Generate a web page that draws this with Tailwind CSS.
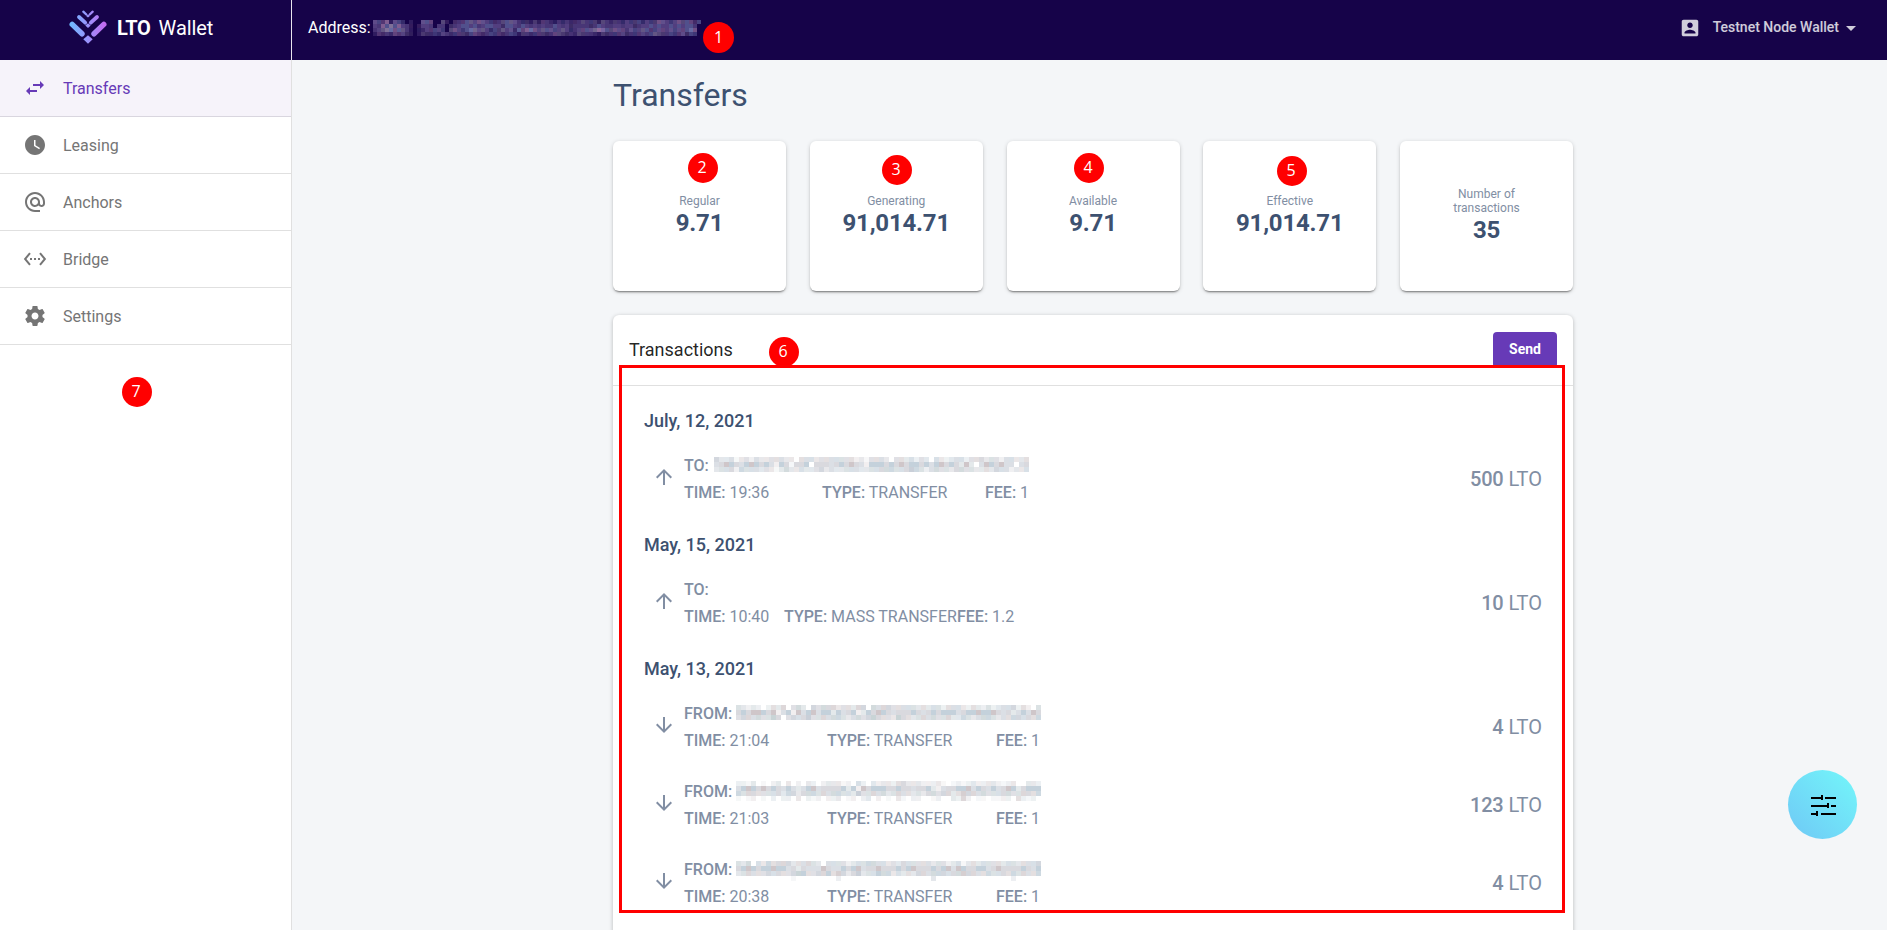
<!DOCTYPE html>
<html lang="en">
<head>
<meta charset="utf-8">
<title>LTO Wallet</title>
<script src="https://cdn.jsdelivr.net/npm/@tailwindcss/browser@4"></script>
</head>
<body class="font-[Roboto,sans-serif] bg-[#f4f6f8]">
<div class="relative flex h-[930px] w-[1887px] overflow-hidden bg-[#f4f6f8]">

  <!-- Sidebar -->
  <aside class="flex w-[292px] shrink-0 flex-col border-r border-[#e0e0e0] bg-white">
    <div class="-mr-px flex h-[60px] shrink-0 items-center border-r border-[#e8e5ee] bg-[#160349] pl-[69px] text-white">
      <svg class="-mt-1.5 h-[34px] w-[38px]" viewBox="0 0 38 34" fill="none">
        <defs><linearGradient id="g" gradientUnits="userSpaceOnUse" x1="0" y1="0" x2="38" y2="0"><stop offset="0" stop-color="#6cbcff"/><stop offset=".5" stop-color="#9a92fc"/><stop offset="1" stop-color="#c767ee"/></linearGradient></defs>
        <g stroke="url(#g)">
          <path stroke-width="5.400" stroke-linecap="round" d="M3.200 14.400 13 23.800M34.800 14.400 25 23.800"/>
          <path stroke-width="3.800" stroke-linecap="round" d="M10 7 16.200 12.700M28 7 21.800 12.700"/>
          <path stroke-width="2.300" stroke-linecap="round" d="M14.300 1.700 17.300 4.500M23.700 1.700 20.700 4.500"/>
        </g>
        <path fill="url(#g)" d="M19 25.200 23.700 29.200 19 33.800 14.300 29.200ZM19 13.200 21.700 15.600 19 18 16.300 15.600ZM19 4.400 20.900 6 19 7.500 17.100 6Z"/>
      </svg>
      <div class="-mt-[5px] ml-[10px] flex gap-[8px] text-[20px] leading-[24px]"><span class="font-bold tracking-[-0.3px]">LTO</span><span class="tracking-[-0.1px]">Wallet</span></div>
    </div>
    <nav class="flex flex-col text-[16px] text-[#757575]">
      <a class="flex h-[57px] items-center gap-4 border-b border-[#d9d6df] bg-[#f6f3fa] pl-[23px] text-[#673ab7]">
        <svg class="size-6" viewBox="0 0 24 24" fill="currentColor"><path d="M6.990 11L3 15l3.990 4v-3H14v-2H6.990v-3zM21 9l-3.990-4v3H10v2h7.010v3L21 9z"/></svg><span class="pt-0.5">Transfers</span></a>
      <a class="flex h-[57px] items-center gap-4 border-b border-[#e0e0e0] pl-[23px]">
        <svg class="size-6" viewBox="0 0 24 24" fill="currentColor"><path d="M12 2C6.500 2 2 6.500 2 12s4.500 10 10 10 10-4.500 10-10S17.500 2 12 2zm4.200 14.200L11 13V7h1.500v5.200l4.500 2.700-.8 1.300z"/></svg><span class="pt-0.5">Leasing</span></a>
      <a class="flex h-[57px] items-center gap-4 border-b border-[#e0e0e0] pl-[23px]">
        <svg class="size-6" viewBox="0 0 24 24" fill="currentColor"><path d="M12 2C6.480 2 2 6.480 2 12s4.480 10 10 10h5v-2h-5c-4.340 0-8-3.660-8-8s3.660-8 8-8 8 3.660 8 8v1.430c0 .79-.71 1.570-1.500 1.570s-1.500-.78-1.500-1.570V12c0-2.760-2.240-5-5-5s-5 2.240-5 5 2.240 5 5 5c1.380 0 2.640-.56 3.540-1.470.65.890 1.770 1.470 2.960 1.470 1.970 0 3.500-1.600 3.500-3.570V12c0-5.520-4.480-10-10-10zm0 13c-1.660 0-3-1.340-3-3s1.340-3 3-3 3 1.340 3 3-1.340 3-3 3z"/></svg><span class="pt-0.5">Anchors</span></a>
      <a class="flex h-[57px] items-center gap-4 border-b border-[#e0e0e0] pl-[23px]">
        <svg class="size-6" viewBox="0 0 24 24" fill="currentColor"><path d="M7.770 6.760L6.230 5.480.82 12l5.410 6.520 1.540-1.280L3.420 12l4.350-5.240zM7 13h2v-2H7v2zm10-2h-2v2h2v-2zm-6 2h2v-2h-2v2zm6.770-7.520l-1.540 1.280L20.580 12l-4.350 5.240 1.540 1.280L23.180 12l-5.410-6.520z"/></svg><span class="pt-0.5">Bridge</span></a>
      <a class="flex h-[57px] items-center gap-4 border-b border-[#e0e0e0] pl-[23px]">
        <svg class="size-6" viewBox="0 0 24 24" fill="currentColor"><path d="M19.430 12.980c.04-.32.07-.64.07-.98s-.03-.66-.07-.98l2.110-1.650c.19-.15.24-.42.12-.64l-2-3.460c-.12-.22-.39-.3-.61-.22l-2.490 1c-.52-.4-1.080-.73-1.690-.98l-.38-2.650C14.460 2.180 14.250 2 14 2h-4c-.25 0-.46.18-.49.42l-.38 2.650c-.61.25-1.170.59-1.690.98l-2.490-1c-.23-.09-.49 0-.61.22l-2 3.460c-.13.22-.07.49.12.64l2.110 1.650c-.04.32-.07.65-.07.98s.03.66.07.98l-2.110 1.650c-.19.15-.24.42-.12.64l2 3.460c.12.22.39.3.61.22l2.490-1c.52.4 1.080.73 1.690.98l.38 2.650c.03.24.24.42.49.42h4c.25 0 .46-.18.49-.42l.38-2.650c.61-.25 1.170-.59 1.690-.98l2.490 1c.23.09.49 0 .61-.22l2-3.460c.12-.22.07-.49-.12-.64l-2.110-1.650zM12 15.500c-1.930 0-3.500-1.570-3.500-3.500s1.570-3.500 3.500-3.500 3.500 1.570 3.500 3.500-1.570 3.500-3.500 3.500z"/></svg><span class="pt-0.5">Settings</span></a>
    </nav>
  </aside>

  <div class="flex min-w-0 flex-1 flex-col">
    <!-- Top bar -->
    <header class="flex h-[60px] shrink-0 justify-between bg-[#160349] pl-4 pr-[31px] pt-4 text-white">
      <div class="flex h-6 items-start gap-[2px] text-[16px] leading-[23px]"><span>Address:</span><span data-mosaic="head" class="mt-1"></span></div>
      <div class="flex h-6 items-center text-[14px] font-medium text-white/80">
        <svg class="size-[22px]" viewBox="0 0 24 24" fill="currentColor"><path d="M3 5v14c0 1.100.89 2 2 2h14c1.100 0 2-.9 2-2V5c0-1.100-.9-2-2-2H5c-1.110 0-2 .9-2 2zm12 4c0 1.660-1.340 3-3 3s-3-1.340-3-3 1.340-3 3-3 3 1.340 3 3zm-9 8c0-2 4-3.100 6-3.100s6 1.100 6 3.100v1H6v-1z"/></svg>
        <span class="-mt-0.5 ml-3 whitespace-nowrap">Testnet Node Wallet</span>
        <svg class="ml-[7px] h-[5px] w-[10px]" viewBox="0 0 10 5" fill="currentColor"><path d="M0 0h10L5 5z"/></svg>
      </div>
    </header>

    <main class="ml-[321px] flex w-[960px] flex-col">
      <h1 class="mb-[11px] flex h-[70px] items-center text-[32px] text-[#3d5170]">Transfers</h1>

      <section class="grid grid-cols-[173px_173px_173px_173px_173px] justify-between text-center text-[#3d5170]">
        <div class="flex h-[150px] flex-col items-center justify-center rounded-md bg-white shadow-[0_1px_4px_rgba(0,0,0,0.18),0_2px_2px_-1px_rgba(0,0,0,0.45)]"><div class="text-[12px] leading-[14px] text-[#818ea3]">Regular</div><div class="text-[24px] font-bold leading-[30px] tracking-[-0.2px]">9.71</div></div>
        <div class="flex h-[150px] flex-col items-center justify-center rounded-md bg-white shadow-[0_1px_4px_rgba(0,0,0,0.18),0_2px_2px_-1px_rgba(0,0,0,0.45)]"><div class="text-[12px] leading-[14px] text-[#818ea3]">Generating</div><div class="text-[24px] font-bold leading-[30px] tracking-[-0.2px]">91,014.71</div></div>
        <div class="flex h-[150px] flex-col items-center justify-center rounded-md bg-white shadow-[0_1px_4px_rgba(0,0,0,0.18),0_2px_2px_-1px_rgba(0,0,0,0.45)]"><div class="text-[12px] leading-[14px] text-[#818ea3]">Available</div><div class="text-[24px] font-bold leading-[30px] tracking-[-0.2px]">9.71</div></div>
        <div class="flex h-[150px] flex-col items-center justify-center rounded-md bg-white shadow-[0_1px_4px_rgba(0,0,0,0.18),0_2px_2px_-1px_rgba(0,0,0,0.45)]"><div class="text-[12px] leading-[14px] text-[#818ea3]">Effective</div><div class="text-[24px] font-bold leading-[30px] tracking-[-0.2px]">91,014.71</div></div>
        <div class="flex h-[150px] flex-col items-center justify-center rounded-md bg-white shadow-[0_1px_4px_rgba(0,0,0,0.18),0_2px_2px_-1px_rgba(0,0,0,0.45)]"><div class="text-[12px] leading-[14px] text-[#818ea3]">Number of<br>transactions</div><div class="text-[24px] font-bold leading-[30px] tracking-[-0.2px]">35</div></div>
      </section>

      <section class="mt-6 h-[700px] rounded-md bg-white shadow-[0_1px_4px_rgba(0,0,0,0.25)]">
        <div class="flex h-[71px] items-start justify-between border-b border-[#e0e0e0] px-4 pt-[17px]">
          <h2 class="text-[18px] leading-9 text-black/87">Transactions</h2>
          <button class="h-9 w-16 rounded bg-[#673ab7] pb-0.5 text-[14px] font-bold text-white">Send</button>
        </div>
        <div class="flex flex-col pl-[31px] pr-[31px] pt-[7px] text-[16px] leading-[27px] text-[#818ea3]">
          <h3 class="flex h-[46px] items-center pt-[8px] text-[18px] font-medium text-[#3d5170]">July, 12, 2021</h3>
          <div class="flex h-[78px] items-center pl-2">
            <svg class="mb-0.5 size-6" viewBox="0 0 24 24" fill="currentColor"><path d="M4 12l1.410 1.410L11 7.830V20h2V7.830l5.580 5.590L20 12l-8-8-8 8z"/></svg>
            <div class="ml-2 flex-1 pt-0.5"><div class="flex gap-[5px]"><span class="font-medium">TO:</span><span data-mosaic="a" class="mt-[5px]"></span></div>
              <div class="grid grid-cols-[138px_163px_auto] justify-start whitespace-nowrap"><span><b class="font-medium">TIME:</b> 19:36</span><span><b class="font-medium">TYPE:</b> TRANSFER</span><span><b class="font-medium">FEE:</b> 1</span></div></div>
            <div class="pt-0.5 text-[20px]"><b class="font-medium tracking-[-0.2px]">500</b> LTO</div>
          </div>
          <h3 class="flex h-[46px] items-center pt-[8px] text-[18px] font-medium text-[#3d5170]">May, 15, 2021</h3>
          <div class="flex h-[78px] items-center pl-2">
            <svg class="mb-0.5 size-6" viewBox="0 0 24 24" fill="currentColor"><path d="M4 12l1.410 1.410L11 7.830V20h2V7.830l5.580 5.590L20 12l-8-8-8 8z"/></svg>
            <div class="ml-2 flex-1 pt-0.5"><div class="font-medium">TO:</div>
              <div class="grid grid-cols-[100px_173px_auto] justify-start whitespace-nowrap"><span><b class="font-medium">TIME:</b> 10:40</span><span><b class="font-medium">TYPE:</b> MASS TRANSFER</span><span><b class="font-medium">FEE:</b> 1.2</span></div></div>
            <div class="pt-0.5 text-[20px]"><b class="font-medium tracking-[-0.2px]">10</b> LTO</div>
          </div>
          <h3 class="flex h-[46px] items-center pt-[8px] text-[18px] font-medium text-[#3d5170]">May, 13, 2021</h3>
          <div class="flex h-[78px] items-center pl-2">
            <svg class="mb-0.5 size-6" viewBox="0 0 24 24" fill="currentColor"><path d="M20 12l-1.410-1.410L13 16.170V4h-2v12.170l-5.580-5.590L4 12l8 8 8-8z"/></svg>
            <div class="ml-2 flex-1 pt-0.5"><div class="flex gap-[4px]"><span class="font-medium">FROM:</span><span data-mosaic="b" class="mt-[5px]"></span></div>
              <div class="grid grid-cols-[143px_169px_auto] justify-start whitespace-nowrap"><span><b class="font-medium">TIME:</b> 21:04</span><span><b class="font-medium">TYPE:</b> TRANSFER</span><span><b class="font-medium">FEE:</b> 1</span></div></div>
            <div class="pt-0.5 text-[20px]"><b class="font-medium tracking-[-0.2px]">4</b> LTO</div>
          </div>
          <div class="flex h-[78px] items-center pl-2">
            <svg class="mb-0.5 size-6" viewBox="0 0 24 24" fill="currentColor"><path d="M20 12l-1.410-1.410L13 16.170V4h-2v12.170l-5.580-5.590L4 12l8 8 8-8z"/></svg>
            <div class="ml-2 flex-1 pt-0.5"><div class="flex gap-[4px]"><span class="font-medium">FROM:</span><span data-mosaic="c" class="mt-[3px]"></span></div>
              <div class="grid grid-cols-[143px_169px_auto] justify-start whitespace-nowrap"><span><b class="font-medium">TIME:</b> 21:03</span><span><b class="font-medium">TYPE:</b> TRANSFER</span><span><b class="font-medium">FEE:</b> 1</span></div></div>
            <div class="pt-0.5 text-[20px]"><b class="font-medium tracking-[-0.2px]">123</b> LTO</div>
          </div>
          <div class="flex h-[78px] items-center pl-2">
            <svg class="mb-0.5 size-6" viewBox="0 0 24 24" fill="currentColor"><path d="M20 12l-1.410-1.410L13 16.170V4h-2v12.170l-5.580-5.590L4 12l8 8 8-8z"/></svg>
            <div class="ml-2 flex-1 pt-0.5"><div class="flex gap-[4px]"><span class="font-medium">FROM:</span><span data-mosaic="d" class="mt-[5px]"></span></div>
              <div class="grid grid-cols-[143px_169px_auto] justify-start whitespace-nowrap"><span><b class="font-medium">TIME:</b> 20:38</span><span><b class="font-medium">TYPE:</b> TRANSFER</span><span><b class="font-medium">FEE:</b> 1</span></div></div>
            <div class="pt-0.5 text-[20px]"><b class="font-medium tracking-[-0.2px]">4</b> LTO</div>
          </div>
        </div>
      </section>
    </main>
  </div>

  <!-- Floating filter button -->
  <button class="absolute left-[1787.500px] top-[769.500px] flex size-[69px] items-center justify-center rounded-full bg-linear-to-tr from-[#6fc8f5] to-[#73f7fa]">
    <svg class="ml-[3px] mt-px h-[22px] w-[26px]" viewBox="0 0 26 22" fill="#000" shape-rendering="crispEdges"><path d="M0 3h10v2H0zM10 1h2v5h-2zM14 3h11v2H14zM0 11h16v2H0zM16 9h2v5h-2zM20 11h5v2h-5zM0 19h5v2H0zM5 17h2v5H5zM10 19h15v2H10z"/></svg>
  </button>

  <!-- Numbered callouts -->
  <div class="absolute left-[619px] top-[365px] h-[548px] w-[946px] border-3 border-[#f00]"></div>
  <div class="absolute left-[703px] top-[22px] flex size-[31px] items-center justify-center rounded-full bg-[#f00] pb-px font-['Open_Sans',sans-serif] text-[16px] text-white">1</div>
  <div class="absolute left-[687.500px] top-[152.500px] flex size-[30px] items-center justify-center rounded-full bg-[#f00] pb-px pr-px font-['Open_Sans',sans-serif] text-[16px] text-white">2</div>
  <div class="absolute left-[881.500px] top-[154.500px] flex size-[30px] items-center justify-center rounded-full bg-[#f00] pb-px pr-px font-['Open_Sans',sans-serif] text-[16px] text-white">3</div>
  <div class="absolute left-[1073.500px] top-[152.500px] flex size-[30px] items-center justify-center rounded-full bg-[#f00] pb-px pr-px font-['Open_Sans',sans-serif] text-[16px] text-white">4</div>
  <div class="absolute left-[1276.500px] top-[155.500px] flex size-[30px] items-center justify-center rounded-full bg-[#f00] pb-px pr-px font-['Open_Sans',sans-serif] text-[16px] text-white">5</div>
  <div class="absolute left-[768.500px] top-[336.500px] flex size-[30px] items-center justify-center rounded-full bg-[#f00] pb-px pr-px font-['Open_Sans',sans-serif] text-[16px] text-white">6</div>
  <div class="absolute left-[121.500px] top-[376.500px] flex size-[30px] items-center justify-center rounded-full bg-[#f00] pb-px pr-px font-['Open_Sans',sans-serif] text-[16px] text-white">7</div>
</div>

<script>
// Censored addresses: each digit is the ink density of one mosaic cell.
const mosaics = {
  head: { cell: 4, dark: true, rows: [
    '6547265302006650052034466566543456664332424432434334544425434435445354466545656535',
    '5476867542025540440345665645665536654654545446545344443465445545534556565565656640',
    '4568867642023545540565468766535465637578656665565345566788656654655664565565656860',
    '2434354532024334354344435543454434542443444345543435444324344453444545654454463540'] },
  a: { cell: 5, rows: [
    '533413424334443304443444444423144430443424304323442445344244334',
    '457654676564265155605554565754266656575665646756537304765744045',
    '344525444343135334334534334443344555445654245443554433435442334'] },
  b: { cell: 5, rows: [
    '4323202435045305455534435505455444443434424443243242344524204',
    '5657765724627467466364562365765455565456566645667667545346475',
    '4554544650454564454554345456544365434545445335434554344554545'] },
  c: { cell: 5, rows: [
    '2213010230302032023331204203233245333222310121232233212300332',
    '4676575654643467455556362756665565545563245566746546457635666',
    '5455444453553555454554436445453454434355455346554544455445545',
    '1012010202203021202230120230201031022001200325201101122042120'] },
  d: { cell: 5, rows: [
    '4350435455534454304444234455443435444443442341343444434434445',
    '5676566766453544475446567455755565675556567476556645755556546',
    '3454445454456644556465356344655343435545554556554454454545445',
    '0000000000010000000020000000000000000003000000000000000200000'] }
};
const lightTints = [[150,160,178],[165,165,178],[140,165,185],[175,160,165],[150,170,175]];
const darkTints = [[170,155,205],[165,145,200],[140,155,205],[200,155,195],[175,165,190]];
document.querySelectorAll('[data-mosaic]').forEach(el => {
  const m = mosaics[el.dataset.mosaic], c = m.cell, w = m.rows[0].length * c, h = m.rows.length * c;
  let s = '';
  m.rows.forEach((row, y) => [...row].forEach((d, x) => {
    if (d === '0') return;
    const t = (m.dark ? darkTints : lightTints)[(x * 7 + y * 11 + x * y * 3 + +d) % 5];
    s += `<rect x="${x * c}" y="${y * c}" width="${c}" height="${c}" fill="rgb(${t})" fill-opacity="${+d * 0.085}"/>`;
  }));
  el.innerHTML = `<svg width="${w}" height="${h}" viewBox="0 0 ${w} ${h}" shape-rendering="crispEdges">${s}</svg>`;
});
</script>
</body>
</html>
